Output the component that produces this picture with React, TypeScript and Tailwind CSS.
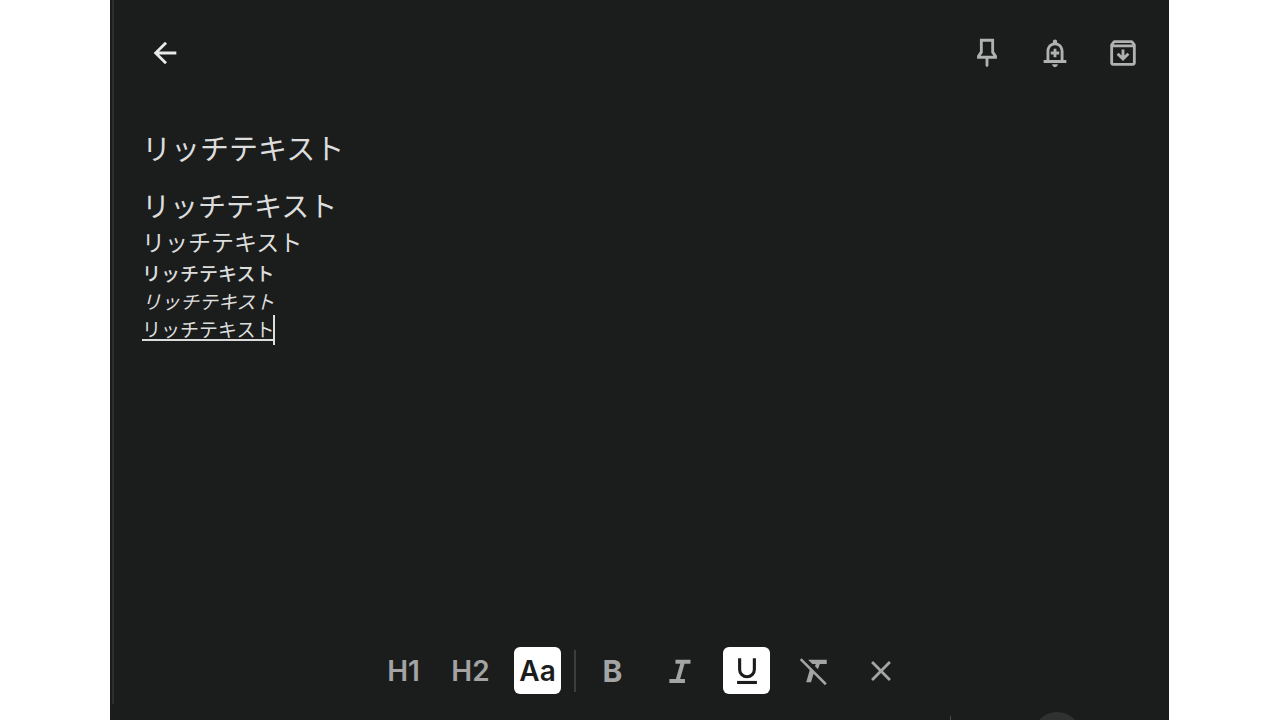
import { useState } from "react";
import type { ReactNode } from "react";

const text = "リッチテキスト";

function Icon({ children }: { children: ReactNode }) {
    return (
        <svg viewBox="0 0 24 24" className="size-[34px]" fill="currentColor" aria-hidden="true">
            {children}
        </svg>
    );
}

function TopButton({ label, path }: { label: string; path: string }) {
    return (
        <button type="button" aria-label={label} className="flex size-[34px] items-center justify-center">
            <Icon>
                <path d={path} />
            </Icon>
        </button>
    );
}

function ToolButton({ label, active, onClick, children }: { label: string; active?: boolean; onClick?: () => void; children: ReactNode }) {
    return (
        <button
            type="button"
            aria-label={label}
            aria-pressed={active}
            onClick={onClick}
            className={`flex size-[47px] items-center justify-center rounded-md font-[Inter,sans-serif] text-[28px] leading-none font-semibold ${active ? "bg-white text-[#1b1d1c]" : "text-[#a3a4a3]"}`}
        >
            {children}
        </button>
    );
}

export default function App() {
    const [title, setTitle] = useState(text);
    const [size, setSize] = useState("normal");
    const [underline, setUnderline] = useState(true);

    return (
        <div className="min-h-screen bg-white font-['Noto_Sans_CJK_JP',sans-serif]">
            <div className="relative mr-[111px] ml-[110px] flex min-h-screen flex-col overflow-hidden bg-[#1b1d1c] text-[#dcdddc]">
                <div className="absolute top-0 bottom-4 left-0.5 w-0.5 bg-[#2c2f2e]" />

                <header className="flex items-center justify-between pt-9 pr-[29px] pl-[38px]">
                    <a href="#notes" aria-label="戻る" className="text-[#e8e9e8]">
                        <Icon>
                            <path d="M20 11H7.83l5.59-5.59L12 4l-8 8 8 8 1.41-1.41L7.83 13H20v-2z" />
                        </Icon>
                    </a>
                    <div className="flex gap-[34px] text-[#b0b1b0]">
                        <TopButton label="固定" path="M17 2v9l2 3v2h-6v5l-1 1-1-1v-5H5v-2l2-3V2h10zM9 4v7.75L7.5 14h9L15 11.75V4H9z" />
                        <TopButton label="リマインダー" path="M18 17v-6c0-3.07-1.63-5.64-4.5-6.32V4c0-.83-.67-1.5-1.5-1.5s-1.5.67-1.5 1.5v.68C7.64 5.36 6 7.92 6 11v6H4v2h16v-2h-2zm-2 0H8v-6c0-2.48 1.51-4.5 4-4.5s4 2.02 4 4.5v6zm-4 5c1.1 0 2-.9 2-2h-4c0 1.1.9 2 2 2zM15 11h-2V9h-2v2H9v2h2v2h2v-2h2v-2z" />
                        <TopButton label="アーカイブ" path="M20.54 5.23l-1.39-1.68C18.88 3.21 18.47 3 18 3H6c-.47 0-.88.21-1.16.55L3.46 5.23C3.17 5.57 3 6.02 3 6.5V19c0 1.1.89 2 2 2h14c1.1 0 2-.9 2-2V6.5c0-.48-.17-.93-.46-1.27zM6.24 5h11.52l.83 1H5.42l.82-1zM5 19V8h14v11H5zM16.5 13.2L12 17.7l-4.5-4.5 1.41-1.41L11 13.8V9.5h2v4.3l2.09-2.01L16.5 13.2z" />
                    </div>
                </header>

                <main className="flex-1 px-8 pt-[58px]">
                    <input
                        aria-label="タイトル"
                        value={title}
                        onChange={(e) => setTitle(e.target.value)}
                        className="block h-10 w-full bg-transparent text-[29px] outline-none"
                    />
                    <div
                        role="textbox"
                        aria-label="メモ"
                        contentEditable
                        suppressContentEditableWarning
                        className="mt-[17px] text-[19px] leading-7 outline-none"
                    >
                        <h1 className="text-[28px] leading-10">{text}</h1>
                        <h2 className="mb-0.5 text-[23px] leading-8">{text}</h2>
                        <p className="font-medium">{text}</p>
                        <p className="italic">{text}</p>
                        <p className="relative">
                            <span className="underline decoration-2 underline-offset-2">{text}</span>
                            <span className="absolute -ml-px h-[30px] w-0.5 bg-[#dcdddc]" />
                        </p>
                    </div>
                </main>

                <div className="flex items-center justify-center gap-5 pb-[26px] pl-[5px]">
                    <ToolButton label="見出し 1" active={size === "h1"} onClick={() => setSize("h1")}>H1</ToolButton>
                    <ToolButton label="見出し 2" active={size === "h2"} onClick={() => setSize("h2")}>H2</ToolButton>
                    <div className="flex items-center gap-[13px]">
                        <ToolButton label="標準テキスト" active={size === "normal"} onClick={() => setSize("normal")}>Aa</ToolButton>
                        <div className="h-[42px] w-0.5 bg-[#3c3e3d]" />
                        <ToolButton label="太字">
                            <span className="text-3xl leading-none font-bold">B</span>
                        </ToolButton>
                    </div>
                    <ToolButton label="斜体">
                        <Icon>
                            <path d="M8.8 4v2.9h3.4L9.1 17.6H4.5v2.9h11v-2.9h-3.4l3.1-10.7h4.2V4z" />
                        </Icon>
                    </ToolButton>
                    <ToolButton label="下線" active={underline} onClick={() => setUnderline(!underline)}>
                        <Icon>
                            <path d="M6.8 3v7.9a5.2 5.2 0 0 0 10.4 0V3" fill="none" stroke="currentColor" strokeWidth="2.2" />
                            <path d="M5 19h14v2.2H5z" />
                        </Icon>
                    </ToolButton>
                    <ToolButton label="書式をクリア">
                        <Icon>
                            <path d="M3.27 3L2 4.27l6.97 6.97L6.5 20h3.4l1.8-6.1L19.73 22 21 20.73 3.55 3.27 3.27 3zM8 4v.18L10.82 7h2.4l-.5 1.7 2.1 2.1L16.1 7H21V4H8z" />
                        </Icon>
                    </ToolButton>
                    <ToolButton label="閉じる">
                        <Icon>
                            <path d="M19 6.41L17.59 5 12 10.59 6.41 5 5 6.41 10.59 12 5 17.59 6.41 19 12 13.41 17.59 19 19 17.59 13.41 12z" />
                        </Icon>
                    </ToolButton>
                </div>

                <div className="absolute right-[218px] bottom-0 h-1 w-px bg-[#4a4c4b]" />
                <div className="absolute right-[88px] -bottom-10 size-12 rounded-full bg-[#303231]" />
            </div>
        </div>
    );
}
